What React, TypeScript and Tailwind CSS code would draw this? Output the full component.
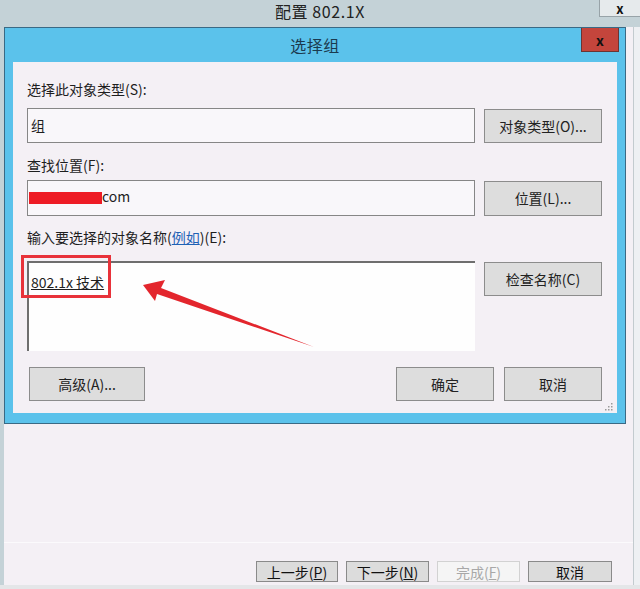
import React from "react";

function Btn({ children, className = "" }: { children: React.ReactNode; className?: string }) {
  return (
    <div
      className={
        "h-[34px] flex items-center justify-center bg-[#dddddd] border border-[#8c8c8c] text-[14px] leading-[20px] text-[#222] " +
        className
      }
    >
      {children}
    </div>
  );
}

function WizBtn({ children, disabled = false, w }: { children: React.ReactNode; disabled?: boolean; w: string }) {
  return (
    <div
      className={
        (disabled
          ? "bg-[#f5f5f5] border-[#d2d2d2] text-[#a8a8a8] "
          : "bg-[#dcdcdc] border-[#8a8a8a] text-[#111] ") +
        "h-[21px] border flex items-center justify-center text-[14px] leading-[18px] " +
        w
      }
    >
      {children}
    </div>
  );
}

export default function App() {
  return (
    <div className="relative w-[640px] h-[589px] overflow-hidden bg-[#e4e7e9] flex flex-col font-['Noto_Sans_CJK_SC','Noto_Sans',sans-serif] text-[#1e1e1e]">
      {/* outer title bar */}
      <div className="h-[27px] shrink-0 bg-[#c4d2d7] grid grid-cols-[1fr_auto_1fr] items-start">
        <div />
        <div className="text-[16px] leading-[22px] tracking-[0.6px] text-[#222]">配置 802.1X</div>
        <div className="flex justify-end">
          <div className="w-[41px] h-[17px] bg-[#e6eaec] border-l border-b border-[#98a3a8] flex items-center justify-center text-[13px] font-bold leading-none text-[#111]">
            x
          </div>
        </div>
      </div>

      <div className="flex flex-1 min-h-0">
        <div className="w-[4px] bg-[#c4d2d7]" />
        <div className="w-[629px] bg-[#f4f0f5] flex flex-col">
          {/* dialog */}
          <div className="w-[622px] border border-[#3a6a85] bg-[#5bc2eb] flex flex-col">
            <div className="h-[34px] grid grid-cols-[1fr_auto_1fr] items-start">
              <div />
              <div className="text-[16px] leading-[34px] tracking-[0.5px] text-[#1b3a4f]">选择组</div>
              <div className="flex justify-end pr-[6px]">
                <div className="w-[38px] h-[24px] bg-[#c4453c] border border-[#6b3434] border-t-0 flex items-center justify-center text-[14px] font-bold leading-none text-[#111]">
                  x
                </div>
              </div>
            </div>
            <div className="relative mx-[8px] mb-[10px] h-[351px] bg-[#f4f0f5] flex flex-col pl-[14px] pr-[15px] pt-[17px]">
              <div className="text-[14px] leading-[20px]">选择此对象类型(S):</div>
              <div className="mt-[9px] flex items-center gap-[9px]">
                <div className="w-[448px] h-[35px] bg-[#f9f7fa] border border-[#868686] flex items-center pl-[3px] text-[14px]">
                  组
                </div>
                <Btn className="w-[118px] h-[33px]">对象类型(O)...</Btn>
              </div>

              <div className="mt-[12px] text-[14px] leading-[20px]">查找位置(F):</div>
              <div className="mt-[5px] flex items-center gap-[9px]">
                <div className="w-[448px] h-[36px] bg-[#f9f7fa] border border-[#868686] flex items-center pl-[1px] text-[14px]">
                  <span className="inline-block w-[73px] h-[12px] bg-[#ee1c25]" />
                  <span className="-mt-[4px]">com</span>
                </div>
                <Btn className="w-[118px] h-[35px]">位置(L)...</Btn>
              </div>

              <div className="mt-[11px] text-[14px] leading-[20px]">
                输入要选择的对象名称(<span className="text-[#1f62b5] underline">例如</span>)(E):
              </div>
              <div className="mt-[14px] flex items-start gap-[9px]">
                <div className="w-[448px] h-[90px] bg-[#fefefe] border-t-2 border-l-2 border-[#6e6e6e] pl-[2px] pt-[9px] text-[14px] leading-[20px]">
                  <span className="underline">802.1x 技术</span>
                </div>
                <Btn className="w-[118px] mt-[1px]">检查名称(C)</Btn>
              </div>

              <div className="mt-[16px] flex items-center">
                <Btn className="ml-[2px] w-[116px]">高级(A)...</Btn>
                <div className="flex-1" />
                <Btn className="w-[98px]">确定</Btn>
                <Btn className="ml-[10px] w-[98px]">取消</Btn>
              </div>

              <svg className="absolute right-[4px] bottom-[2px]" width="9" height="9" viewBox="0 0 9 9">
                <rect x="7" y="1" width="1.5" height="1.5" fill="#9a9a9a" />
                <rect x="7" y="4" width="1.5" height="1.5" fill="#9a9a9a" />
                <rect x="4" y="4" width="1.5" height="1.5" fill="#9a9a9a" />
                <rect x="7" y="7" width="1.5" height="1.5" fill="#9a9a9a" />
                <rect x="4" y="7" width="1.5" height="1.5" fill="#9a9a9a" />
                <rect x="1" y="7" width="1.5" height="1.5" fill="#9a9a9a" />
              </svg>
            </div>
          </div>

          <div className="flex-1" />
          <div className="h-px bg-[#fbfafc]" />
          <div className="h-[42px] pt-[18px] flex justify-end gap-[8px] pr-[21px]">
            <WizBtn w="w-[82px]">
              上一步(<span className="underline">P</span>)
            </WizBtn>
            <WizBtn w="w-[83px]">
              下一步(<span className="underline">N</span>)
            </WizBtn>
            <WizBtn w="w-[83px]" disabled>
              完成(<span className="underline">F</span>)
            </WizBtn>
            <WizBtn w="w-[84px]">取消</WizBtn>
          </div>
        </div>
        <div className="w-px bg-[#c3cbcf]" />
        <div className="flex-1 bg-[#eef0f3]" />
      </div>
      <div className="h-[4px] shrink-0 bg-[#e4e6e8]" />

      {/* annotation overlay */}
      <svg className="absolute left-0 top-0 pointer-events-none" width="640" height="589" viewBox="0 0 640 589">
        <rect x="22.5" y="256.5" width="87" height="40" fill="none" stroke="#e8323a" strokeWidth="3" />
        <polygon points="143,285 165,280 161,288 314,347 157,294 155,301" fill="#e3262d" />
      </svg>
    </div>
  );
}
